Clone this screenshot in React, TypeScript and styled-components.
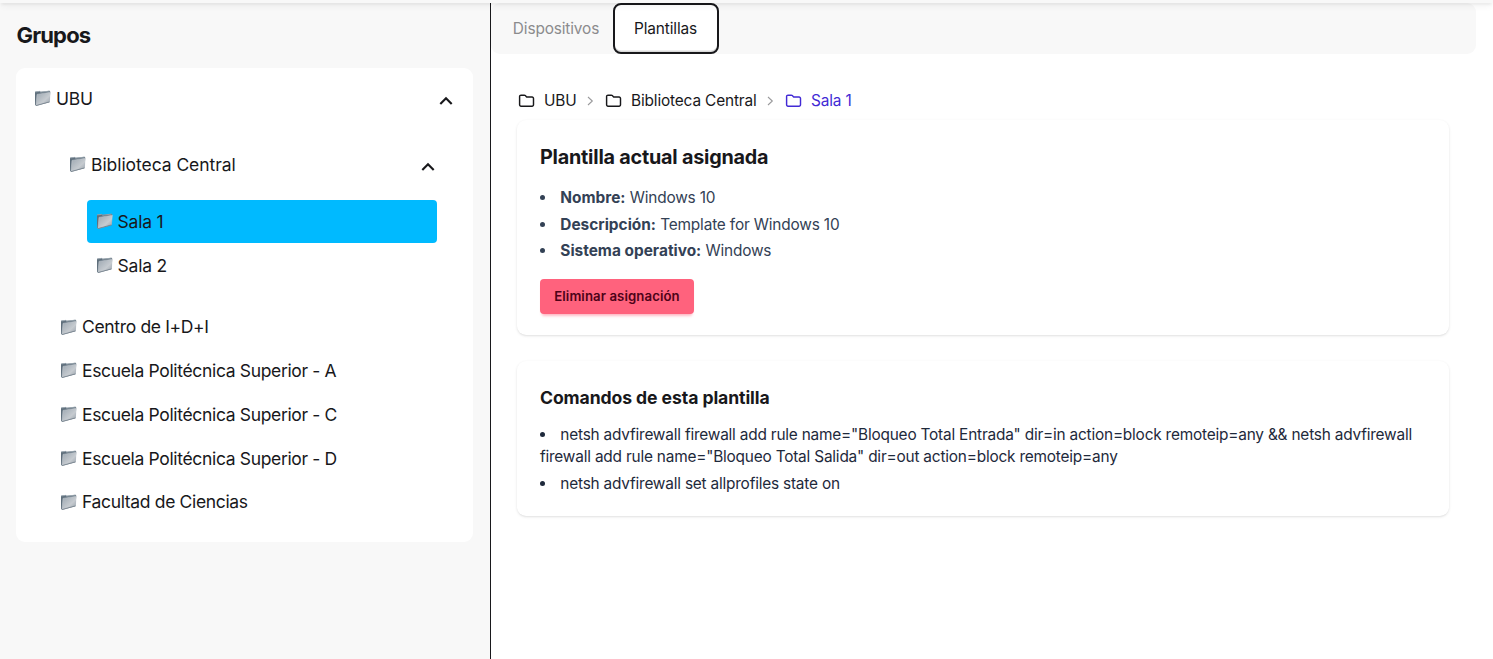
import React from "react";
import styled, { createGlobalStyle } from "styled-components";

const GlobalStyle = createGlobalStyle`
  *, *::before, *::after { box-sizing: border-box; }
  body {
    margin: 0;
    background: #fff;
    color: #18181b;
    font-family: Inter, "Liberation Sans", sans-serif;
    font-size: 15px;
    overflow: hidden;
  }
  h1, h2, h3, ul { margin: 0; padding: 0; }
  button { font-family: inherit; }
`;

const Page = styled.div`
  display: flex;
  flex-direction: column;
  height: 659px;
`;

const Navbar = styled.header`
  flex: none;
  height: 3px;
  background: #f8f8f8;
  position: relative;
  z-index: 2;
  box-shadow: 0 3px 6px -1px rgba(0, 0, 0, 0.19), 0 2px 3px -1px rgba(0, 0, 0, 0.18);
`;

const Columns = styled.div`
  flex: 1;
  display: flex;
  min-height: 0;
`;

const Sidebar = styled.aside`
  width: 491px;
  flex: none;
  padding: 17px 17px 0 16px;
  background: #f8f8f8;
  border-right: 1px solid #18181b;
`;

const SidebarTitle = styled.h1`
  height: 30px;
  line-height: 30px;
  margin-bottom: 18px;
  padding-left: 0.5px;
  font-size: 22px;
  font-weight: 700;
  letter-spacing: -0.85px;
`;

const Tree = styled.nav`
  height: 474px;
  padding: 8px 18px;
  border-radius: 9px;
  background: #fff;
`;

const Branch = styled.div`
  display: flex;
  align-items: center;
  justify-content: space-between;
  height: 44px;
  padding-right: 2px;
`;

const Leaf = styled.div<{ $active?: boolean }>`
  display: flex;
  align-items: center;
  height: 43.8px;
  padding-left: 9px;
  border-radius: 4px;
  background: ${(p) => (p.$active ? "#00baff" : "transparent")};
`;

const Subtree = styled.div`
  margin: 22px 18px 17.7px 35px;
`;

const Rooms = styled.div`
  margin: 13.5px 0 0 17.5px;
`;

const Centers = styled.div`
  padding-left: 17px;
`;

const Label = styled.span<{ $spacing: number }>`
  display: inline-flex;
  align-items: center;
  gap: 5px;
  font-size: 17.5px;
  letter-spacing: ${(p) => p.$spacing}px;
  white-space: nowrap;
`;

const Main = styled.main`
  flex: 1;
  min-width: 0;
`;

const Tabs = styled.div`
  display: flex;
  height: 51px;
  width: 985px;
  padding-left: 4px;
  background: #f8f8f8;
  border-radius: 9px;
`;

const Tab = styled.button<{ $active?: boolean }>`
  width: ${(p) => (p.$active ? 106 : 118)}px;
  height: 51px;
  padding: ${(p) => (p.$active ? "0 1px 0 0" : "0 0 0 4px")};
  font-size: 15.4px;
  letter-spacing: ${(p) => (p.$active ? -0.12 : -0.13)}px;
  color: ${(p) => (p.$active ? "#18181b" : "#8b8b8d")};
  background: ${(p) => (p.$active ? "#fff" : "transparent")};
  border: ${(p) => (p.$active ? "2px solid #18181b" : "0")};
  border-radius: 8px;
  box-shadow: ${(p) => (p.$active ? "inset 0 -1.5px 0 #d9d9d9" : "none")};
`;

const Content = styled.div`
  padding: 34px 44px 0 26px;
`;

const Breadcrumbs = styled.nav`
  display: flex;
  align-items: center;
  height: 25px;
  margin-bottom: 7px;
  padding-left: 1px;
`;

const Crumb = styled.span<{ $active?: boolean }>`
  display: inline-flex;
  align-items: center;
  gap: 9px;
  color: ${(p) => (p.$active ? "#422ad5" : "#18181b")};
  font-size: 15.4px;
  letter-spacing: -0.15px;
`;

const Separator = styled.svg`
  margin: 0 11px 0 10.5px;
`;

const Card = styled.section<{ $height: number }>`
  height: ${(p) => p.$height}px;
  margin-bottom: 26px;
  padding: 22px 23px;
  border-radius: 9px;
  background: #fff;
  box-shadow: 0 1px 3px rgba(0, 0, 0, 0.1), 0 1px 2px -1px rgba(0, 0, 0, 0.1);
`;

const CardTitle = styled.h2<{ $small?: boolean }>`
  height: 30px;
  line-height: ${(p) => (p.$small ? 30 : 31)}px;
  font-size: ${(p) => (p.$small ? 17.6 : 19.8)}px;
  font-weight: 700;
  letter-spacing: ${(p) => (p.$small ? -0.09 : -0.22)}px;
`;

const List = styled.ul<{ $commands?: boolean }>`
  margin-top: ${(p) => (p.$commands ? 11 : 15)}px;
  list-style-position: inside;
  color: ${(p) => (p.$commands ? "#1e293b" : "#334155")};
`;

const Item = styled.li<{ $spacing: number }>`
  line-height: 22px;
  margin-bottom: 4.5px;
  font-size: 15.4px;
  letter-spacing: ${(p) => p.$spacing}px;

  strong {
    font-weight: 700;
    letter-spacing: 0.01px;
  }
`;

const ItemText = styled.span`
  margin-left: -1.1px;
`;

const DeleteButton = styled.button`
  display: block;
  width: 154px;
  height: 35px;
  margin-top: 16.7px;
  padding: 0;
  border: 0;
  border-radius: 4px;
  background: #ff627d;
  color: #4d0218;
  font-size: 13.2px;
  font-weight: 600;
  letter-spacing: 0.09px;
  box-shadow: 0 3px 3px -2px rgba(255, 98, 125, 0.3), 0 4px 3px -2px rgba(255, 98, 125, 0.3);
`;

const ChevronIcon = styled.svg`
  margin-top: 5px;
`;

const Chevron = () => (
  <ChevronIcon width="14" height="10" viewBox="0 0 14 10" fill="none" stroke="#18181b" strokeWidth="2.1">
    <path d="M1.3 8.1 7 2.3l5.7 5.8" />
  </ChevronIcon>
);

const EmojiFolder = () => (
  <svg width="17" height="18" viewBox="0 0 17 18">
    <defs>
      <linearGradient id="folderFront" x1="0" y1="0" x2="1" y2="1">
        <stop offset="0" stopColor="#9ba6b0" />
        <stop offset=".6" stopColor="#c6cbd0" />
        <stop offset="1" stopColor="#939ca5" />
      </linearGradient>
    </defs>
    <path d="M1 2.9 1.6 2.4l4.2-.4.8.8 8.8-1.1.8.8-.6 10.8L2.2 16.7 1 16Z" fill="#5f6f7c" />
    <path d="m1.1 2.9 4.6-.5 1 .8 8.8-1.1" fill="none" stroke="#aab6bf" strokeWidth=".7" />
    <path d="M3 5.4 16.4 3.2 15.3 12.9 2 16.6Z" fill="url(#folderFront)" stroke="#cbd1d6" strokeWidth=".5" />
    <path d="m2 16.6 13.3-3.7" stroke="#687581" strokeWidth=".7" />
  </svg>
);

const OutlineFolder = () => (
  <svg width="17" height="16" viewBox="0 0 17 16" fill="none" stroke="currentColor" strokeWidth="1.45" strokeLinejoin="round">
    <path d="M1.6 3.6A1.4 1.4 0 0 1 3 2.2h3.3c.4 0 .7.1 1 .4l1.1 1.1c.2.2.4.3.7.3h5a1.4 1.4 0 0 1 1.4 1.4v6.4a1.4 1.4 0 0 1-1.4 1.4H3a1.4 1.4 0 0 1-1.4-1.4Z" />
  </svg>
);

const CrumbSeparator = () => (
  <Separator width="7" height="10" viewBox="0 0 7 10" fill="none" stroke="#9a9a9c" strokeWidth="1.1">
    <path d="m1 1 4.3 4L1 9" />
  </Separator>
);

const FolderLabel = ({ children, spacing = -0.2 }: { children: React.ReactNode; spacing?: number }) => (
  <Label $spacing={spacing}>
    <EmojiFolder />
    {children}
  </Label>
);

const centers = [
  "Centro de I+D+I",
  "Escuela Politécnica Superior - A",
  "Escuela Politécnica Superior - C",
  "Escuela Politécnica Superior - D",
  "Facultad de Ciencias",
];

const assigned = [
  ["Nombre:", "Windows 10"],
  ["Descripción:", "Template for Windows 10"],
  ["Sistema operativo:", "Windows"],
];

const commands = [
  'netsh advfirewall firewall add rule name="Bloqueo Total Entrada" dir=in action=block remoteip=any && netsh advfirewall firewall add rule name="Bloqueo Total Salida" dir=out action=block remoteip=any',
  "netsh advfirewall set allprofiles state on",
];

export default function App() {
  return (
    <Page>
      <GlobalStyle />
      <Navbar />
      <Columns>
        <Sidebar>
          <SidebarTitle>Grupos</SidebarTitle>
          <Tree>
            <Branch>
              <FolderLabel>UBU</FolderLabel>
              <Chevron />
            </Branch>
            <Subtree>
              <Branch>
                <FolderLabel spacing={-0.06}>Biblioteca Central</FolderLabel>
                <Chevron />
              </Branch>
              <Rooms>
                <Leaf $active><FolderLabel>Sala 1</FolderLabel></Leaf>
                <Leaf><FolderLabel>Sala 2</FolderLabel></Leaf>
              </Rooms>
            </Subtree>
            <Centers>
              {centers.map((name) => (
                <Leaf key={name}>
                  <FolderLabel spacing={-0.34}>{name}</FolderLabel>
                </Leaf>
              ))}
            </Centers>
          </Tree>
        </Sidebar>
        <Main>
          <Tabs>
            <Tab>Dispositivos</Tab>
            <Tab $active>Plantillas</Tab>
          </Tabs>
          <Content>
            <Breadcrumbs>
              <Crumb><OutlineFolder />UBU</Crumb>
              <CrumbSeparator />
              <Crumb><OutlineFolder />Biblioteca Central</Crumb>
              <CrumbSeparator />
              <Crumb $active><OutlineFolder />Sala 1</Crumb>
            </Breadcrumbs>
            <Card $height={215}>
              <CardTitle>Plantilla actual asignada</CardTitle>
              <List>
                {assigned.map(([name, value]) => (
                  <Item key={name} $spacing={-0.17}>
                    <ItemText><strong>{name}</strong> {value}</ItemText>
                  </Item>
                ))}
              </List>
              <DeleteButton>Eliminar asignación</DeleteButton>
            </Card>
            <Card $height={155}>
              <CardTitle $small>Comandos de esta plantilla</CardTitle>
              <List $commands>
                {commands.map((command) => (
                  <Item key={command} $spacing={-0.2}>
                    <ItemText>{command}</ItemText>
                  </Item>
                ))}
              </List>
            </Card>
          </Content>
        </Main>
      </Columns>
    </Page>
  );
}
